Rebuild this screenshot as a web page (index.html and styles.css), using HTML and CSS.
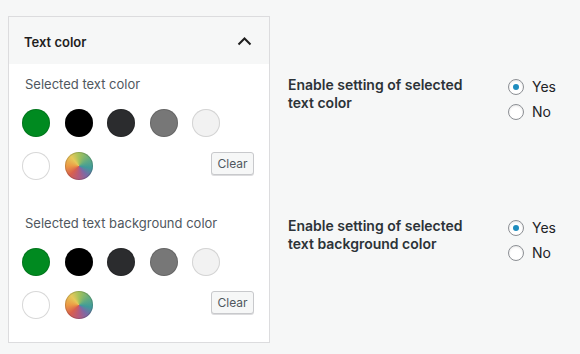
FILE: index.html
```html
<!DOCTYPE html>
<html lang="en">
<head>
    <meta charset="UTF-8">
    <title>Text color settings</title>
    <link rel="stylesheet" href="styles.css">
</head>
<body>
    <div class="layout">
        <div class="panel">
            <div class="panel-header">
                <span class="panel-title">Text color</span>
                <svg class="chevron" width="15" height="9" viewBox="0 0 15 9">
                    <path d="M1.5 7.5 L7.5 1.5 L13.5 7.5" fill="none" stroke="#1e1e1e" stroke-width="2"/>
                </svg>
            </div>
            <div class="panel-body">
                <div class="group">
                    <div class="group-label">Selected text color</div>
                    <div class="swatches">
                        <span class="swatch green"></span>
                        <span class="swatch black"></span>
                        <span class="swatch dark"></span>
                        <span class="swatch gray"></span>
                        <span class="swatch light"></span>
                        <span class="swatch white"></span>
                        <span class="swatch custom"></span>
                        <button class="clear">Clear</button>
                    </div>
                </div>
                <div class="group">
                    <div class="group-label">Selected text background color</div>
                    <div class="swatches">
                        <span class="swatch green"></span>
                        <span class="swatch black"></span>
                        <span class="swatch dark"></span>
                        <span class="swatch gray"></span>
                        <span class="swatch light"></span>
                        <span class="swatch white"></span>
                        <span class="swatch custom"></span>
                        <button class="clear">Clear</button>
                    </div>
                </div>
            </div>
        </div>

        <div class="settings">
            <div class="setting">
                <div class="setting-label">Enable setting of selected text color</div>
                <div class="choices">
                    <label class="choice"><span class="radio checked"></span>Yes</label>
                    <label class="choice"><span class="radio"></span>No</label>
                </div>
            </div>
            <div class="setting">
                <div class="setting-label">Enable setting of selected text background color</div>
                <div class="choices">
                    <label class="choice"><span class="radio checked"></span>Yes</label>
                    <label class="choice"><span class="radio"></span>No</label>
                </div>
            </div>
        </div>
    </div>
</body>
</html>
```

FILE: styles.css
```css
* {
    margin: 0;
    padding: 0;
    box-sizing: border-box;
}

body {
    background: #f6f7f7;
    font-family: Inter, "Noto Sans", sans-serif;
    color: #1d2327;
}

.layout {
    display: flex;
    align-items: flex-start;
    gap: 18px;
    padding: 16px 8px;
}

.panel {
    width: 262px;
    background: #fff;
    border: 1px solid #dcdcde;
}

.panel-header {
    height: 47px;
    display: flex;
    align-items: center;
    justify-content: space-between;
    padding: 2px 17px 0 15px;
    background: #f6f7f7;
}

.panel-title {
    font-size: 13px;
    font-weight: 600;
    color: #1e1e1e;
}

.panel-body {
    padding: 11px 15px 23px 16px;
}

.group + .group {
    margin-top: 34px;
}

.group-label {
    font-size: 13px;
    line-height: 18px;
    color: #50575e;
}

.swatches {
    display: grid;
    grid-template-columns: repeat(5, 28px) 1fr;
    column-gap: 14.5px;
    row-gap: 15px;
    margin: 16px 0 0 -3px;
}

.swatch {
    width: 28px;
    height: 28px;
    border-radius: 50%;
    box-shadow: inset 0 0 0 1px rgba(0, 0, 0, 0.15);
}

.swatch.light {
    grid-column: 5;
}

.swatch.white {
    grid-column: 1;
}

.green { background: #008a20; }
.black { background: #000; }
.dark { background: #2b2c2e; }
.gray { background: #777; }
.light { background: #f2f2f2; box-shadow: inset 0 0 0 1px #d4d4d4; }
.white { background: #fff; box-shadow: inset 0 0 0 1px #d8d8d8; }

.custom {
    background: conic-gradient(#a4c25a, #5eaa84 60deg, #3f9a9a 100deg, #7a6aa6 140deg, #b25a80 180deg, #d8604e 225deg, #eb9a45 270deg, #e6c95a 320deg, #a4c25a);
}

.clear {
    grid-column: 4 / -1;
    justify-self: end;
    align-self: start;
    width: 43px;
    height: 23px;
    border: 1px solid #c8c9cc;
    border-radius: 3px;
    background: #f6f7f7;
    box-shadow: 0 1px 0 #dcdcde;
    font-family: Inter, "Noto Sans", sans-serif;
    font-size: 12px;
    color: #50575e;
}

.settings {
    display: flex;
    flex-direction: column;
    gap: 97px;
    padding-top: 60px;
}

.setting {
    display: grid;
    grid-template-columns: 220px 1fr;
}

.setting-label {
    width: 190px;
    font-size: 14px;
    font-weight: 600;
    line-height: 18px;
    color: #2c3338;
}

.choices {
    display: flex;
    flex-direction: column;
    gap: 9px;
    padding-top: 3px;
}

.choice {
    display: flex;
    align-items: center;
    gap: 8px;
    font-size: 14px;
    line-height: 16px;
    color: #1d2327;
}

.radio {
    width: 16px;
    height: 16px;
    border-radius: 50%;
    border: 1px solid #8c8f94;
    background: #fff;
    box-shadow: inset 0 1px 2px rgba(0, 0, 0, 0.1);
    display: flex;
    align-items: center;
    justify-content: center;
}

.radio.checked::after {
    content: "";
    width: 6px;
    height: 6px;
    border-radius: 50%;
    background: #1e8cbe;
}
```
